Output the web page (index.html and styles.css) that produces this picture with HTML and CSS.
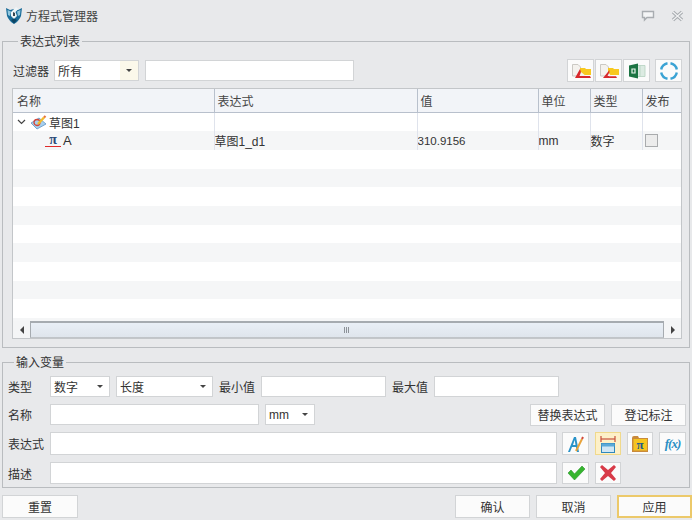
FILE: index.html
```html
<!DOCTYPE html>
<html lang="zh-CN">
<head>
    <meta charset="UTF-8">
    <meta name="viewport" content="width=device-width, initial-scale=1.0">
    <title>方程式管理器</title>
    <link rel="stylesheet" href="styles.css">
</head>
<body>
    <div class="window">
        <div class="titlebar">
            <svg class="app-icon" width="18" height="19" viewBox="0 0 18 19">
                <path d="M1 2 L5 4 L9 3 L13 4 L17 2 L16 10 Q14 15 9 18 Q4 15 2 10 Z" fill="#1a6c99"/>
                <path d="M2.5 4 L6 5.5 L5 10 L3 9 Z M15.5 4 L12 5.5 L13 10 L15 9 Z" fill="#8fc6de"/>
                <path d="M6 6 L11 1 L13.5 3 L10.5 6 L12 10 L9 13 L6 10 Z" fill="#eef5f8"/>
                <path d="M8 6 L10 7 L10 10 L8 10 Z" fill="#36454f"/>
                <path d="M6 14 L9 12.5 L12 14 L9 17.5 Z" fill="#0c4564"/>
            </svg>
            <span class="title">方程式管理器</span>
            <div class="window-btns">
                <svg width="14" height="12" viewBox="0 0 14 12">
                    <path d="M1.5 1.5 H12.5 V7.5 H6 L3.5 10 V7.5 H1.5 Z" fill="#f4f5f6" stroke="#a9adb1" stroke-width="1.4"/>
                </svg>
                <svg width="13" height="12" viewBox="0 0 13 12">
                    <path d="M2 2 L11 10 M11 2 L2 10" stroke="#a9adb1" stroke-width="3.4"/>
                    <path d="M2 2 L11 10 M11 2 L2 10" stroke="#f1f2f3" stroke-width="1.2"/>
                </svg>
            </div>
        </div>

        <fieldset class="group list-group">
            <legend>表达式列表</legend>
            <div class="filter-row">
                <span class="filter-label">过滤器</span>
                <div class="combo filter-combo"><span>所有</span><span class="drop"><i class="arrow"></i></span></div>
                <input type="text" class="field filter-input">
                <div class="tools">
                    <button class="icon-btn tool">
                        <svg width="22" height="18" viewBox="0 0 22 18">
                            <path d="M2.5 2.5 H8 L10.5 5 V14 H2.5 Z" fill="#f4f2ee" stroke="#cbc9c4"/>
                            <path d="M10 6 H15 L16 7 H21 V13 H10 Z" fill="#f8c91f"/>
                            <path d="M5 16 H21 L20 14 H12 L10 7 Z" fill="#d8282c"/>
                            <path d="M9.5 14 H16 L11 10 Z" fill="#f4f2ee"/>
                        </svg>
                    </button>
                    <button class="icon-btn tool">
                        <svg width="22" height="18" viewBox="0 0 22 18">
                            <path d="M2.5 2.5 H8 L10.5 5 V14 H2.5 Z" fill="#f4f2ee" stroke="#cbc9c4"/>
                            <path d="M10 6 H15 L16 7 H21 V13 H10 Z" fill="#f8c91f"/>
                            <path d="M5 16 H19 L18 14.2 H11 L11.5 8 Z" fill="#d8282c"/>
                            <path d="M9.5 14 H13 L11 11 Z" fill="#f4f2ee"/>
                        </svg>
                    </button>
                    <button class="icon-btn tool">
                        <svg width="20" height="18" viewBox="0 0 20 18">
                            <path d="M10 3.5 H18 V14.5 H10 Z" fill="#dcebe2" stroke="#b5d2c0" stroke-width="0.8"/>
                            <path d="M13 3.5 V14.5" stroke="#b5d2c0" stroke-width="0.8"/>
                            <path d="M2 3.5 L11 1.5 V16.5 L2 14.5 Z" fill="#1c7443"/>
                            <path d="M5 7 H8 V11 H5 Z" fill="none" stroke="#e8f3ec" stroke-width="1.2"/>
                        </svg>
                    </button>
                    <button class="icon-btn tool refresh">
                        <svg width="20" height="20" viewBox="0 0 20 20">
                            <g fill="none" stroke="#3ba3d4" stroke-width="2.4">
                                <path d="M2.2 8.5 A8 8 0 0 1 8.5 2.2"/>
                                <path d="M11.5 2.2 A8 8 0 0 1 17.8 8.5"/>
                                <path d="M17.8 11.5 A8 8 0 0 1 11.5 17.8"/>
                                <path d="M8.5 17.8 A8 8 0 0 1 2.2 11.5"/>
                            </g>
                        </svg>
                    </button>
                </div>
            </div>

            <div class="table-box">
                <div class="table-scroll">
                    <table class="expr-table">
                        <colgroup>
                            <col class="col-name"><col class="col-expr"><col class="col-value">
                            <col class="col-unit"><col class="col-type"><col class="col-pub">
                        </colgroup>
                        <thead>
                            <tr><th>名称</th><th>表达式</th><th>值</th><th>单位</th><th>类型</th><th>发布</th></tr>
                        </thead>
                        <tbody>
                            <tr>
                                <td>
                                    <div class="tree-cell">
                                        <svg width="9" height="6" viewBox="0 0 9 6"><path d="M1 1 L4.5 4.5 L8 1" fill="none" stroke="#444" stroke-width="1.2"/></svg>
                                        <svg class="sketch" width="17" height="15" viewBox="0 0 17 15">
                                            <path d="M1 8 L9 3 L16 9 L7 14 Z" fill="#a6d0ee" stroke="#5f93c4" stroke-width="0.8"/>
                                            <circle cx="7" cy="7.5" r="3" fill="none" stroke="#d2473a" stroke-width="1.3"/>
                                            <path d="M8 9 L14 2.5" stroke="#f2bb2c" stroke-width="2.4"/>
                                            <path d="M14 2.5 L15.5 1" stroke="#e8743a" stroke-width="2.2"/>
                                        </svg>
                                        <span>草图1</span>
                                    </div>
                                </td>
                                <td></td><td></td><td></td><td></td><td></td>
                            </tr>
                            <tr class="alt">
                                <td>
                                    <div class="leaf-cell">
                                        <span class="pi">π</span>
                                        <span class="leaf-name">A</span>
                                    </div>
                                </td>
                                <td>草图1_d1</td>
                                <td><span class="num">310.9156</span></td>
                                <td>mm</td>
                                <td>数字</td>
                                <td><i class="check-box"></i></td>
                            </tr>
                            <tr><td class="blank" colspan="6"></td></tr>
                            <tr class="alt"><td class="blank" colspan="6"></td></tr>
                            <tr><td class="blank" colspan="6"></td></tr>
                            <tr class="alt"><td class="blank" colspan="6"></td></tr>
                            <tr><td class="blank" colspan="6"></td></tr>
                            <tr class="alt"><td class="blank" colspan="6"></td></tr>
                            <tr><td class="blank" colspan="6"></td></tr>
                            <tr class="alt"><td class="blank" colspan="6"></td></tr>
                            <tr><td class="blank" colspan="6"></td></tr>
                            <tr class="alt"><td class="blank" colspan="6"></td></tr>
                        </tbody>
                    </table>
                </div>
                <div class="scrollbar">
                    <span class="scroll-end"><i class="tri-left"></i></span>
                    <div class="thumb"><i class="grip"></i></div>
                    <span class="scroll-end"><i class="tri-right"></i></span>
                </div>
            </div>
        </fieldset>

        <fieldset class="group input-group">
            <legend>输入变量</legend>
            <div class="row">
                <span class="label">类型</span>
                <div class="combo type-combo"><span>数字</span><i class="arrow"></i></div>
                <div class="combo kind-combo"><span>长度</span><i class="arrow"></i></div>
                <span class="label-min">最小值</span>
                <input type="text" class="field limit">
                <span class="label-min">最大值</span>
                <input type="text" class="field limit">
            </div>
            <div class="row">
                <span class="label">名称</span>
                <input type="text" class="field name-input">
                <div class="combo unit-combo"><span>mm</span><i class="arrow"></i></div>
                <div class="row-actions">
                    <button class="btn">替换表达式</button>
                    <button class="btn">登记标注</button>
                </div>
            </div>
            <div class="row tall">
                <span class="label">表达式</span>
                <input type="text" class="field wide">
                <button class="icon-btn">
                    <svg width="20" height="20" viewBox="0 0 20 20">
                        <path d="M2 18 L8 3 H10 L13 18 H11 L10 13 H6 L4 18 Z M7 11 H9.5 L8.7 6 Z" fill="#2a93c9"/>
                        <path d="M10 17 L16 5" stroke="#e8a33a" stroke-width="2"/>
                        <path d="M16 5 L17 3" stroke="#d2473a" stroke-width="2"/>
                    </svg>
                </button>
                <button class="icon-btn active">
                    <svg width="16" height="20" viewBox="0 0 16 20">
                        <path d="M1 2 V8 M15 2 V8" stroke="#c8503c" stroke-width="1.2"/>
                        <path d="M1 5 H15" stroke="#c8503c" stroke-width="1.2"/>
                        <rect x="1.5" y="9.5" width="13" height="9" fill="#cfe6f5" stroke="#2f87bd"/>
                        <rect x="1.5" y="9.5" width="13" height="3" fill="#5aa9d8"/>
                    </svg>
                </button>
                <button class="icon-btn">
                    <svg width="20" height="20" viewBox="0 0 20 20">
                        <path d="M2 4 Q2 2 4 2 H8 L9 4 H18 V18 H2 Z" fill="#c98a3c"/>
                        <rect x="3.5" y="5" width="13.5" height="11.5" fill="#f5c51f"/>
                        <text class="pi-mark" x="10" y="14.5" text-anchor="middle">π</text>
                    </svg>
                </button>
                <button class="icon-btn">
                    <span class="fx">f(x)</span>
                </button>
            </div>
            <div class="row last">
                <span class="label">描述</span>
                <input type="text" class="field wide">
                <button class="icon-btn">
                    <svg width="20" height="18" viewBox="0 0 20 18">
                        <path d="M2 9 L5 6 L8.5 10 L16 2 L19 5 L8.5 16 Z" fill="#36b52e" stroke="#27932a" stroke-width="0.6"/>
                    </svg>
                </button>
                <button class="icon-btn">
                    <svg width="18" height="18" viewBox="0 0 18 18">
                        <path d="M3 1 L9 6 L15 1 L17 3 L12 9 L17 15 L15 17 L9 12 L3 17 L1 15 L6 9 L1 3 Z" fill="#d83a48"/>
                    </svg>
                </button>
            </div>
        </fieldset>

        <div class="footer">
            <button class="btn footer-btn">重置</button>
            <div class="footer-right">
                <button class="btn footer-btn">确认</button>
                <button class="btn footer-btn">取消</button>
                <button class="btn footer-btn default">应用</button>
            </div>
        </div>
    </div>
</body>
</html>
```

FILE: styles.css
```css
body {
    margin: 0;
    background-color: #e8e9eb;
    color: #333;
    font-family: "Liberation Sans", "Noto Sans CJK SC", sans-serif;
    font-size: 12px;
}

.window {
    width: 692px;
    height: 520px;
    overflow: hidden;
}

.titlebar {
    height: 32px;
    display: flex;
    align-items: center;
    padding: 0 0 1px 5px;
    box-sizing: border-box;
}

.app-icon {
    margin-right: 3px;
}

.title {
    color: #444;
}

.window-btns {
    margin-left: auto;
    margin-right: 8px;
    display: flex;
    align-items: center;
    gap: 16px;
}

.group {
    margin: 0 0 0 2px;
    width: 688px;
    box-sizing: border-box;
    border: 1px solid #b9bcbf;
    min-width: 0;
}

.group legend {
    margin-left: 6px;
    padding: 2px 2px 0;
    line-height: 16px;
    color: #333;
}

.list-group {
    padding: 9px 7px 8px 9px;
    height: 316px;
}

.filter-row {
    display: flex;
    align-items: center;
    height: 23px;
    margin-bottom: 6px;
}

.filter-label {
    width: 42px;
    margin-left: 1px;
    flex: none;
}

.combo {
    height: 100%;
    box-sizing: border-box;
    background: white;
    border: 1px solid #d2d4d6;
    display: flex;
    align-items: center;
    justify-content: space-between;
    padding: 0 6px 0 3px;
    color: #333;
    flex: none;
}

.arrow {
    width: 0;
    height: 0;
    border-left: 3px solid transparent;
    border-right: 3px solid transparent;
    border-top: 3px solid #444;
}

.filter-combo {
    width: 85px;
    height: 21px;
    margin-left: -1px;
    padding: 0 0 0 3px;
}

.drop {
    width: 18px;
    align-self: stretch;
    background: #fbf8ea;
    display: flex;
    align-items: center;
    justify-content: center;
}

.field {
    height: 21px;
    box-sizing: border-box;
    background: white;
    border: 1px solid #d2d4d6;
    padding: 0 3px;
    margin: 0;
    font: inherit;
    outline: none;
    flex: none;
}

.filter-input {
    width: 209px;
    margin-left: 6px;
}

.tools {
    margin-left: auto;
    display: flex;
    gap: 1px;
}

.icon-btn {
    width: 27px;
    padding: 0;
    box-sizing: border-box;
    background: #fbfbfb;
    border: 1px solid #d2d4d6;
    display: flex;
    align-items: center;
    justify-content: center;
    font: inherit;
    flex: none;
}

.tool {
    height: 23px;
}

.refresh {
    margin-left: 4px;
}

.table-box {
    width: 670px;
    height: 251px;
    box-sizing: border-box;
    border: 1px solid #c3c6c9;
    background: white;
    overflow: hidden;
}

.table-scroll {
    height: 232px;
    overflow: hidden;
}

.expr-table {
    width: 668px;
    table-layout: fixed;
    border-collapse: collapse;
}

.col-name { width: 201px; }
.col-expr { width: 203px; }
.col-value { width: 121px; }
.col-unit { width: 52px; }
.col-type { width: 52px; }
.col-pub { width: 39px; }

.expr-table th {
    height: 23px;
    padding: 0 3px;
    background-color: #f2f4f8;
    border-right: 1px solid #b8c0cc;
    border-bottom: 1px solid #b8c0cc;
    font-weight: normal;
    text-align: left;
    color: #444;
}

.expr-table th:first-child {
    padding-left: 4px;
}

.expr-table th:last-child {
    border-right: none;
}

.expr-table td {
    height: 18.7px;
    box-sizing: border-box;
    padding: 0;
    border-right: 1px solid #dfe3ec;
    white-space: nowrap;
    overflow: hidden;
}

.expr-table td:last-child {
    border-right: none;
}

.expr-table td.blank {
    border: none;
}

.alt td {
    background-color: #f5f6f7;
}

.num {
    font-size: 11.5px;
}

.tree-cell {
    display: flex;
    align-items: center;
    height: 17px;
    padding-left: 4px;
}

.sketch {
    margin: 0 2px 0 4px;
}

.leaf-cell {
    display: flex;
    align-items: center;
    height: 18px;
    padding-left: 32px;
}

.pi {
    width: 16px;
    height: 12px;
    margin-right: 2px;
    margin-bottom: 1px;
    line-height: 11px;
    text-align: center;
    font-family: "Liberation Serif", serif;
    font-size: 14px;
    font-weight: bold;
    color: #2b4a78;
    border-bottom: 1px solid #e02a2a;
}

.leaf-name {
    font-size: 13px;
}

.check-box {
    display: block;
    width: 13px;
    height: 13px;
    margin-left: 2px;
    box-sizing: border-box;
    border: 1px solid #a9abad;
    background: #ececec;
}

.scrollbar {
    height: 17px;
    display: flex;
    align-items: stretch;
    background: #f4f5f6;
}

.scroll-end {
    width: 17px;
    flex: none;
    display: flex;
    align-items: center;
    justify-content: center;
}

.tri-left {
    border-top: 4px solid transparent;
    border-bottom: 4px solid transparent;
    border-right: 4px solid #444;
}

.tri-right {
    border-top: 4px solid transparent;
    border-bottom: 4px solid transparent;
    border-left: 4px solid #444;
}

.thumb {
    flex: 1;
    box-sizing: border-box;
    border: 1px solid #a6abb0;
    border-top-width: 2px;
    border-bottom-color: #c0c4c8;
    background: linear-gradient(#e9eff6, #dfe5ec);
    display: flex;
    align-items: center;
    justify-content: center;
}

.grip {
    width: 6px;
    height: 6px;
    background: repeating-linear-gradient(90deg, #8d9298 0, #8d9298 1px, transparent 1px, transparent 2px);
}

.input-group {
    margin-top: 5px;
    padding: 5px 3px 3px 5px;
    height: 135px;
}

.row {
    display: flex;
    align-items: center;
    height: 21px;
    margin-bottom: 7px;
}

.row.tall {
    height: 23px;
}

.row.last {
    height: 22px;
    margin-bottom: 0;
}

.row .field {
    height: 100%;
}

.row .icon-btn {
    height: 100%;
    margin-left: 5px;
}

.row .icon-btn + .icon-btn {
    width: 26px;
    margin-left: 6px;
}

.row .icon-btn + .icon-btn + .icon-btn + .icon-btn {
    width: 27px;
}

.label {
    width: 42px;
    flex: none;
}

.type-combo {
    width: 60px;
}

.kind-combo {
    width: 97px;
    margin-left: 6px;
}

.label-min {
    margin: 0 6px;
}

.limit {
    width: 125px;
}

.name-input {
    width: 209px;
}

.unit-combo {
    width: 50px;
    margin-left: 6px;
}

.wide {
    width: 507px;
}

.row-actions {
    margin-left: auto;
    display: flex;
    gap: 6px;
}

.btn {
    width: 75px;
    height: 23px;
    padding: 0;
    box-sizing: border-box;
    background: #fbfbfb;
    border: 1px solid #d2d4d6;
    font: inherit;
    color: #333;
}

.row-actions .btn {
    height: 22px;
}

.active {
    background: #fdf0c8;
    border-color: #f0d98c;
}

.pi-mark {
    font-family: "Liberation Serif", serif;
    font-size: 13px;
    font-weight: bold;
    fill: #1d5c8c;
}

.fx {
    font-family: "Liberation Serif", serif;
    font-style: italic;
    font-weight: bold;
    font-size: 13px;
    letter-spacing: -1px;
    color: #2a8fc4;
}

.footer {
    margin-top: 7px;
    margin-left: 2px;
    display: flex;
    justify-content: space-between;
}

.footer-right {
    display: flex;
    gap: 6px;
}

.footer-btn {
    width: 76px;
}

.footer-right .footer-btn {
    width: 75px;
}

.default {
    border: 2px solid #ecc96a;
}
```
